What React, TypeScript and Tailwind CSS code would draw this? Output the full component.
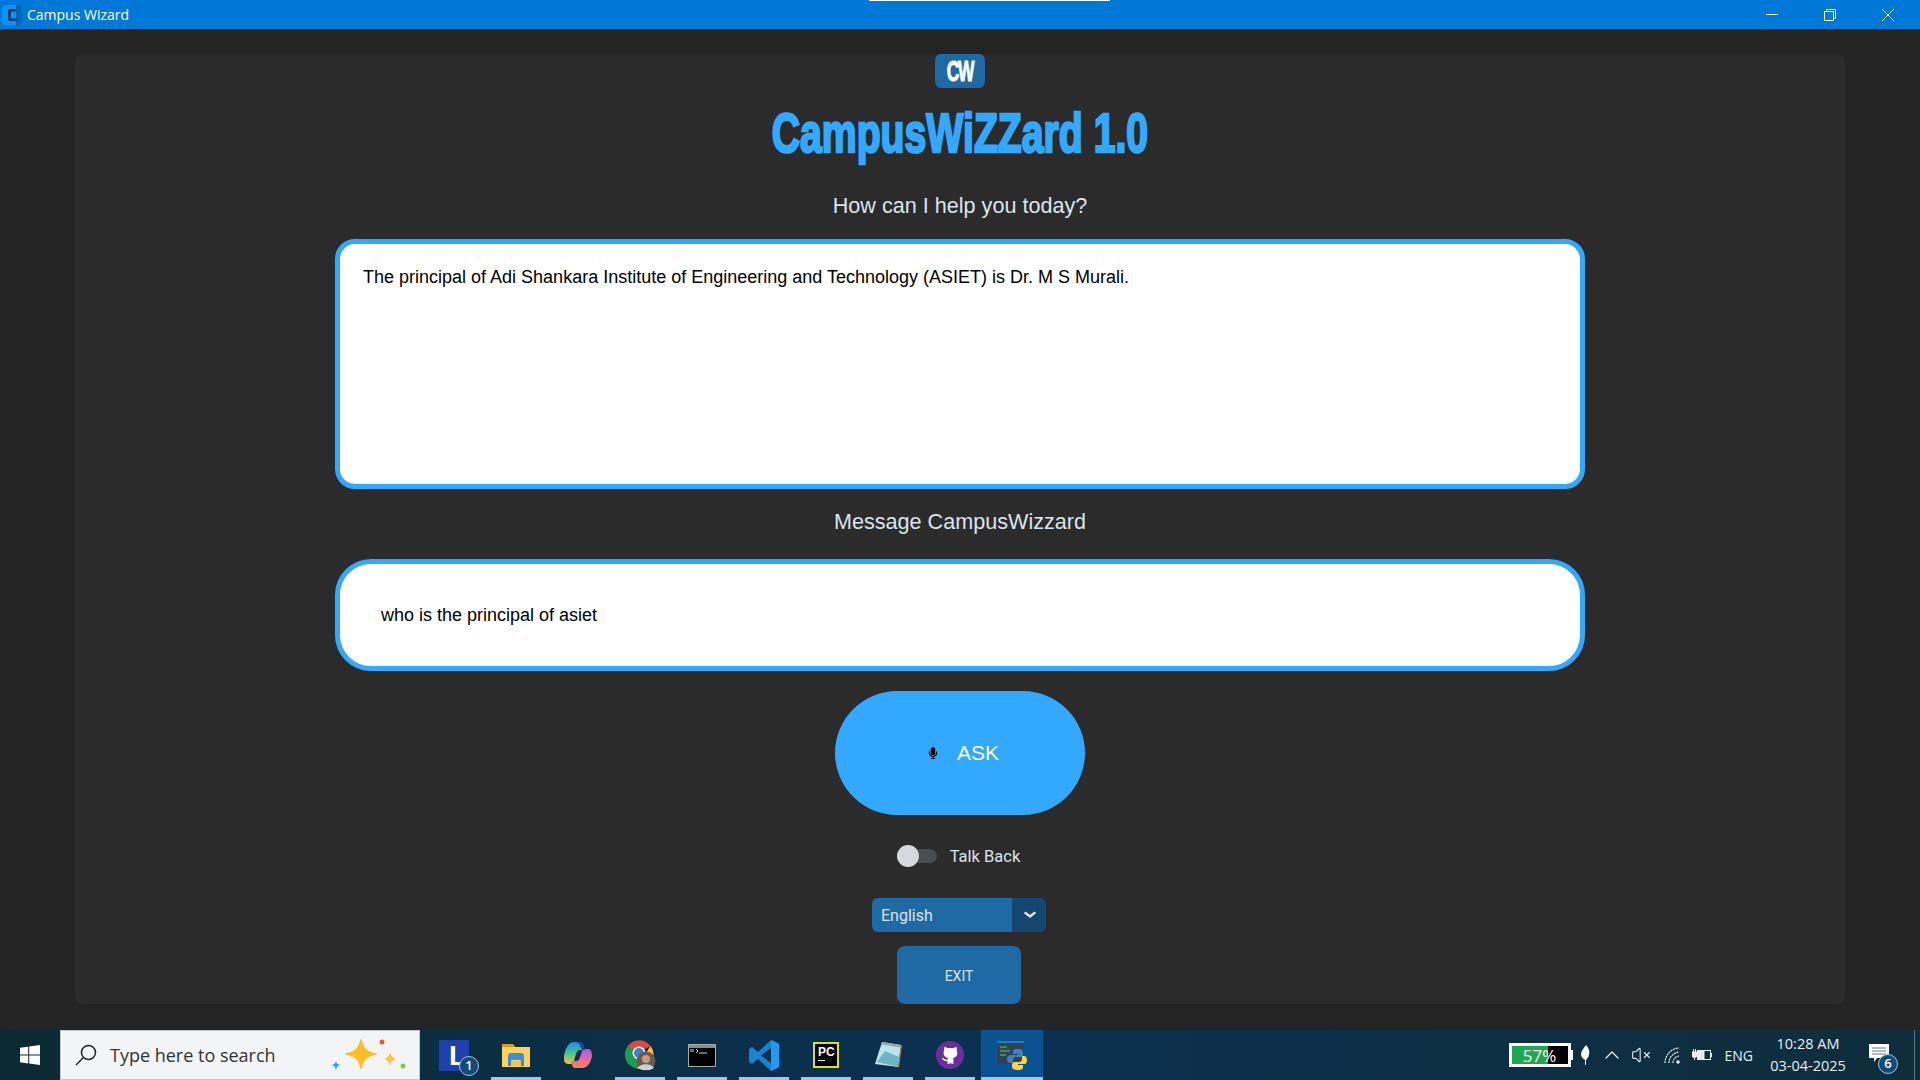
import { ChevronUp, Github, VolumeX } from "lucide-react";
import { FaMicrophone } from "react-icons/fa";

const arial = "font-['Liberation_Sans',Arial,sans-serif]";
const roboto = "font-['Roboto',sans-serif]";
const segoe = "font-['Open_Sans',sans-serif]";

function TitleBar() {
  return (
    <div className="relative flex h-[29px] shrink-0 items-center bg-[#0078d7] pl-[2px] pr-[3px] text-white">
      <div className="absolute left-[869px] top-0 h-px w-[241px] bg-white" />
      <svg width="20" height="20" viewBox="0 0 20 20">
        <rect width="20" height="20" rx="4" fill="#0a94fb" />
        <path d="M14 0h2a4 4 0 0 1 4 4v12a4 4 0 0 1-4 4h-2z" fill="#0668b4" />
        <path d="M15 4H8a2 2 0 0 0-2 2v8a2 2 0 0 0 2 2h7v-2.500H9V6.500h6z" fill="#063f74" />
      </svg>
      <span className={`ml-[5px] text-[14px] ${segoe}`}>Campus Wizard</span>
      <div className="ml-auto flex">
        <div className="flex h-[29px] w-[58px] items-center justify-center">
          <div className="h-px w-3 bg-white" />
        </div>
        <div className="flex h-[29px] w-[58px] items-center justify-center">
          <svg width="12" height="12" viewBox="0 0 12 12" fill="none" stroke="white">
            <rect x="0.500" y="2.500" width="9" height="9" />
            <path d="M2.500 2.500V.5h9v9H9.500" />
          </svg>
        </div>
        <div className="flex h-[29px] w-[58px] items-center justify-center">
          <svg width="12" height="12" viewBox="0 0 12 12" stroke="white">
            <path d="M0 0l12 12M12 0L0 12" />
          </svg>
        </div>
      </div>
    </div>
  );
}

function Panel() {
  return (
    <div className="flex h-[950px] flex-col items-center rounded-lg bg-[#2b2b2b]">
      <div className="flex h-[34px] w-[50px] items-center justify-center rounded-md bg-[#1f6aa5]">
        <span className={`inline-block scale-x-[0.58] text-[30px] font-bold leading-none tracking-[-2px] text-white [-webkit-text-stroke:1px_white] ${arial}`}>
          CW
        </span>
      </div>
      <div className={`mt-[17px] flex h-[56px] scale-x-[0.7] items-center whitespace-nowrap text-[56px] font-bold leading-none text-[#33a8ff] [-webkit-text-stroke:2.500px_#33a8ff] ${arial}`}>
        CampusWiZZard 1.0
      </div>
      <div className={`mt-[33px] h-6 text-[21.600px] leading-6 text-[#dce4ee] ${arial}`}>How can I help you today?</div>
      <div className={`mt-[21px] h-[250px] w-[1250px] rounded-[20px] border-[5px] border-[#33a8ff] bg-white px-[23px] pt-[22px] text-[18px] leading-[22px] text-black ${arial}`}>
        The principal of Adi Shankara Institute of Engineering and Technology (ASIET) is Dr. M S Murali.
      </div>
      <div className={`mt-[21px] h-6 text-[21.600px] leading-6 text-[#dce4ee] ${arial}`}>Message CampusWizzard</div>
      <div className={`mt-[25px] flex h-[112px] w-[1250px] items-center rounded-[36px] border-[5px] border-[#33a8ff] bg-white pl-[41px] pt-px text-[18px] text-black ${arial}`}>
        who is the principal of asiet
      </div>
      <div className={`mt-[20px] flex h-[124px] w-[250px] items-center justify-center rounded-[62px] bg-[#33a8ff] pl-[6px] text-[21px] text-white ${arial}`}>
        <FaMicrophone size={12} className="text-black" />
        <span className="ml-[18px]">ASK</span>
      </div>
      <div className={`mr-[3px] mt-[30px] flex h-[22px] items-center text-[16.500px] text-[#dce4ee] ${roboto}`}>
        <div className="flex h-[14px] w-10 items-center rounded-full bg-[#4a4d50]">
          <div className="h-[22px] w-[22px] rounded-full bg-[#d5d9de]" />
        </div>
        <span className="ml-[13px] pt-[2px]">Talk Back</span>
      </div>
      <div className={`mr-[2px] mt-[31px] flex h-[34px] w-[174px] overflow-hidden rounded-md text-[16px] text-[#dce4ee] ${roboto}`}>
        <div className="flex flex-1 items-center bg-[#1f6aa5] pl-[9px] pt-px">English</div>
        <div className="flex w-[34px] items-center justify-center bg-[#144870] pl-px">
          <svg width="12" height="8" viewBox="0 0 12 8" fill="none" stroke="#dce4ee" strokeWidth="2.500" strokeLinecap="round">
            <path d="M1.500 2l4.500 3.500L10.500 2" />
          </svg>
        </div>
      </div>
      <div className={`mr-[2px] mt-[14px] flex h-[58px] w-[124px] items-center justify-center rounded-lg bg-[#1f6aa5] pt-[2px] text-[14px] text-[#dce4ee] ${roboto}`}>
        EXIT
      </div>
    </div>
  );
}

function Slot({ children, line, active }: { children: React.ReactNode; line?: boolean; active?: boolean }) {
  return (
    <div className={`relative flex h-[50px] w-[62px] items-center justify-center ${active ? "bg-[#0a5291]" : ""}`}>
      {children}
      {line && <div className="absolute bottom-0 left-[6px] h-[3px] w-[50px] bg-[#99c9ee]" />}
      {active && <div className="absolute bottom-0 left-0 h-[3px] w-full bg-[#99c9ee]" />}
    </div>
  );
}

function Badge({ n }: { n: string }) {
  return (
    <div className={`flex h-[20px] w-[20px] items-center justify-center rounded-full border border-[#a9c4da] bg-[#0e4c80] text-[13px] font-semibold text-white ${segoe}`}>
      {n}
    </div>
  );
}

function Taskbar() {
  return (
    <div className="relative flex h-[50px] shrink-0 items-center bg-linear-to-r from-[#0c2a33] via-[#0b3152] to-[#0f2d3b] text-white">
      <div className="flex h-[50px] w-[60px] items-center justify-center">
        <svg width="20" height="20" viewBox="0 0 20 20" fill="white">
          <path d="M0 2.800l8.200-1.100v7.900H0zM9.200 1.500L20 0v9.600H9.200zM0 10.500h8.200v7.900L0 17.200zM9.200 10.500H20V20L9.200 18.500z" />
        </svg>
      </div>
      <div className="flex h-[50px] w-[360px] items-center border border-[#c4c7cc] bg-[#f3f4f6] pl-[14px]">
        <svg width="22" height="22" viewBox="0 0 22 22" fill="none" stroke="#222" strokeWidth="1.500">
          <circle cx="13.500" cy="8.500" r="7" />
          <path d="M8.500 13.500L1 21" />
        </svg>
        <span className={`ml-[13px] text-[18px] text-[#333] ${segoe}`}>Type here to search</span>
        <svg className="ml-auto mr-[12px]" width="76" height="34" viewBox="0 0 76 34">
          <path d="M30 2c2 9 5 12 15 14-10 2-13 5-15 14-2-9-5-12-15-14 10-2 13-5 15-14z" fill="#fbbf24" stroke="#fbbf24" strokeWidth="1.500" strokeLinejoin="round" />
          <path d="M59 14c1 4 2 5 6 7-4 1-5 3-6 7-1-4-2-6-6-7 4-2 5-3 6-7z" fill="#fcc63a" />
          <path d="M5 23c1 3 1 3 5 4-4 1-4 1-5 6-1-5-1-5-5-6 4-1 4-1 5-4z" fill="#1ea7f5" />
          <circle cx="51" cy="4" r="2.500" fill="#ea5a2e" />
          <circle cx="72" cy="28" r="2.500" fill="#8cc63f" />
        </svg>
      </div>
      <div className="ml-[3px] flex">
        <Slot>
          <div className="relative h-[31px] w-[30px] bg-[#1e3fae]">
            <span className={`absolute left-[10px] top-[1px] text-[28px] font-bold leading-[30px] text-white ${arial}`}>L</span>
            <div className="absolute left-[20px] top-[16px]">
              <Badge n="1" />
            </div>
          </div>
        </Slot>
        <Slot line>
          <svg width="28" height="23" viewBox="0 0 28 23">
            <path d="M0 0h11l2 3h15v20H0z" fill="#fcd462" />
            <path d="M0 0h11l2 3H0z" fill="#d99a1c" />
            <path d="M6 22V12a3 3 0 0 1 3-3h10a3 3 0 0 1 3 3v10h-3v-5a1 1 0 0 0-1-1h-8a1 1 0 0 0-1 1v5z" fill="#3a8fd8" />
            <rect x="9" y="17" width="10" height="5" fill="#f7c33c" />
          </svg>
          <div className="absolute bottom-0 left-[46px] h-[3px] w-[10px] bg-[#6f9fc3]" />
        </Slot>
        <Slot>
          <svg width="28" height="28" viewBox="0 0 28 28">
            <defs>
              <linearGradient id="cpA" x1="0" y1="0" x2="0" y2="1">
                <stop offset="0" stopColor="#1c8fe8" />
                <stop offset="0.500" stopColor="#3fc48d" />
                <stop offset="1" stopColor="#f5c933" />
              </linearGradient>
              <linearGradient id="cpB" x1="0" y1="0" x2="0" y2="1">
                <stop offset="0" stopColor="#a65be8" />
                <stop offset="0.600" stopColor="#ee6a9a" />
                <stop offset="1" stopColor="#f58a3c" />
              </linearGradient>
            </defs>
            <path d="M10 1h6c3 0 3 4 5 8h-5c-2 0-3 1-4 4l-2 7c-1 2-2 3-4 3H5c-4 0-6-3-5-8C1 9 4 1 10 1z" fill="url(#cpA)" />
            <path d="M18 27h-7c-3 0-3-4-4-7h5c2 0 3-1 4-4l2-6c1-2 2-2 4-2h2c3 0 4 3 4 7-1 6-4 12-10 12z" fill="url(#cpB)" />
            <path d="M11 1h5c2 0 3 3 5 8h-3c-2-5-3-8-7-8z" fill="#17439e" />
          </svg>
        </Slot>
        <Slot line>
          <svg width="32" height="32" viewBox="0 0 32 32">
            <path d="M14 14L26.500 7A14 14 0 0 0 3.500 7.500z" fill="#dd4b3e" />
            <path d="M3.500 7.500A14 14 0 0 0 13 29.500L20 17z" fill="#1f9c50" />
            <path d="M26.500 7A14 14 0 0 1 13 29.500L20 17z" fill="#fbc02d" />
            <circle cx="15" cy="14" r="6.500" fill="#fff" />
            <circle cx="15" cy="14" r="5" fill="#3b82d6" />
            <circle cx="22" cy="22" r="9.500" fill="#6b5a50" />
            <circle cx="22" cy="20" r="4" fill="#c69c84" />
            <path d="M14 29c2-5 13-5 16 0l-4 2h-8z" fill="#c8d2d8" />
          </svg>
        </Slot>
        <Slot line>
          <div className="h-[23px] w-[28px] border border-[#a5a8ab] bg-black">
            <div className="h-[3px] bg-[#8b8e91]" />
            <svg width="20" height="8" viewBox="0 0 20 8" stroke="#d5d5d5">
              <path d="M2 1v3M4 1v3M7 1l2 2-2 2M10 5h8" fill="none" />
            </svg>
          </div>
        </Slot>
        <Slot line>
          <svg width="30" height="31" viewBox="0 0 30 31">
            <path d="M22 0l8 4v23l-8 4-13-12-6 5-3-2v-13l3-2 6 5z" fill="#1683cc" />
            <path d="M22 8v15l-10-7.500z" fill="#0e2f4e" />
            <path d="M22 0l8 4v23l-8 4z" fill="#1f9cf0" />
          </svg>
          <div className="absolute bottom-0 left-[46px] h-[3px] w-[10px] bg-[#6f9fc3]" />
        </Slot>
        <Slot line>
          <div className="flex h-[26px] w-[26px] flex-col border-[2px] border-[#d9e021] bg-black px-[3px] pt-[2px]">
            <span className={`text-[12px] font-bold leading-[12px] text-white ${arial}`}>PC</span>
            <div className="mt-[2px] h-[1px] w-[7px] bg-white" />
          </div>
        </Slot>
        <Slot line>
          <svg width="27" height="28" viewBox="0 0 27 28">
            <path d="M7 1l19 3-3 22L0 23z" fill="#bfe3e8" />
            <path d="M7 1l19 3-.5 2.500L6.500 3.500z" fill="#9aa6a8" />
            <path d="M2 21l21 5 1-10-14-6z" fill="#6fb4c4" />
            <path d="M26 4l1 1-3 22-1-1z" fill="#a87b3a" />
          </svg>
        </Slot>
        <Slot line>
          <div className="flex h-[28px] w-[28px] items-center justify-center rounded-full bg-[#6a2f9c]">
            <Github size={19} strokeWidth={1.500} className="fill-white text-white" />
          </div>
        </Slot>
        <Slot active>
          <svg width="30" height="30" viewBox="0 0 30 30">
            <rect x="0" y="1" width="27" height="23" fill="#2f4254" />
            <rect x="0" y="1" width="27" height="2" fill="#1b7fc4" />
            <path d="M3 7h7M3 11h10M3 15h6" stroke="#43a35a" strokeWidth="1.500" />
            <path d="M21 9c-4 0-5 1-5 3v2h5v1h-7c-2 0-4 1-4 4s2 4 4 4h2v-3c0-2 1-3 3-3h4c2 0 3-1 3-2v-3c0-2-2-3-5-3z" fill="#3e83bb" />
            <path d="M21 30c4 0 5-1 5-3v-2h-5v-1h7c1 0 2-2 2-4s-1-4-3-4h-2v3c0 2-1 3-3 3h-4c-2 0-3 1-3 3v2c0 2 2 3 6 3z" fill="#ffd23f" />
          </svg>
        </Slot>
      </div>
      <div className={`ml-auto flex h-[50px] items-center text-[#e6edf2] ${segoe}`}>
        <div className="flex h-6 w-[62px] items-center justify-center border-[3px] border-white bg-[linear-gradient(90deg,#1fa64f_0_64%,#000_64%)] text-[17px] leading-none text-white">
          57%
        </div>
        <div className="h-[10px] w-[2px] bg-white" />
        <svg className="ml-[8px]" width="9" height="20" viewBox="0 0 9 20" fill="white">
          <path d="M5 0C8 3 9 7 8 10c-.5 2-2 4-3 5v5H4v-5C2 14 0 12 0 9c0-3 3-6 5-9z" />
        </svg>
        <ChevronUp size={24} strokeWidth={1.300} className="ml-[10px]" />
        <VolumeX size={20} strokeWidth={1.300} className="ml-[7px]" />
        <svg className="ml-[13px]" width="17" height="17" viewBox="0 0 17 17" fill="none" stroke="#e6edf2" strokeWidth="1.200">
          <path d="M1 16A15 15 0 0 1 15 1M5 16A11 11 0 0 1 15 5M9 16A7 7 0 0 1 15 9" strokeDasharray="2 0.700" />
          <circle cx="14" cy="15" r="1.200" fill="#e6edf2" />
        </svg>
        <svg className="ml-[11px]" width="20" height="14" viewBox="0 0 20 14" fill="none" stroke="#e6edf2">
          <rect x="5.500" y="2.500" width="13" height="9" />
          <rect x="6" y="3" width="6" height="8" fill="#e6edf2" />
          <path d="M19.500 5v4" />
          <path d="M0 4h5v3a2 2 0 0 1-5 0zM1.500 1v3M3.500 1v3M2.500 9v3" strokeWidth="1" fill="#e6edf2" />
        </svg>
        <span className="ml-[13px] text-[14px]">ENG</span>
        <div className="ml-[16px] flex w-[78px] flex-col items-center text-[14.500px] leading-[22px]">
          <span>10:28 AM</span>
          <span>03-04-2025</span>
        </div>
        <div className="relative ml-[22px] mr-[31px]">
          <svg width="20" height="18" viewBox="0 0 20 18" className="-mt-[4px]">
            <path d="M0 0h20v14H8l-3 4v-4H0z" fill="white" />
            <path d="M3 4h14M3 7h14M3 10h14" stroke="#6b7280" />
          </svg>
          <div className="absolute left-[9px] top-[6px]">
            <Badge n="6" />
          </div>
        </div>
        <div className="absolute right-[5px] h-[50px] w-px bg-[#5b7487]" />
      </div>
    </div>
  );
}

export default function App() {
  return (
    <div className="flex h-[1080px] w-[1920px] flex-col overflow-hidden bg-[#242424]">
      <TitleBar />
      <div className="flex-1 px-[75px] pt-[25px]">
        <Panel />
      </div>
      <Taskbar />
    </div>
  );
}
